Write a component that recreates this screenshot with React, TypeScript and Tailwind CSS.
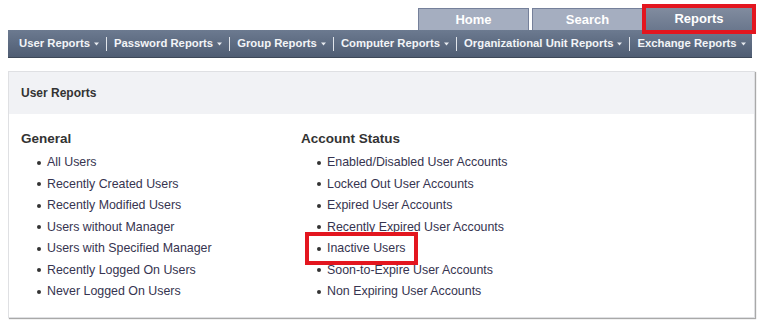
const navItems = [
  "User Reports",
  "Password Reports",
  "Group Reports",
  "Computer Reports",
  "Organizational Unit Reports",
  "Exchange Reports",
];

const general = [
  "All Users",
  "Recently Created Users",
  "Recently Modified Users",
  "Users without Manager",
  "Users with Specified Manager",
  "Recently Logged On Users",
  "Never Logged On Users",
];

const accountStatus = [
  "Enabled/Disabled User Accounts",
  "Locked Out User Accounts",
  "Expired User Accounts",
  "Recently Expired User Accounts",
  "Inactive Users",
  "Soon-to-Expire User Accounts",
  "Non Expiring User Accounts",
];

function Caret() {
  return (
    <svg width="5" height="4" viewBox="0 0 5 4" className="ml-[4px] mt-[1px] shrink-0">
      <path d="M0 0.5h5L2.5 3.5z" fill="#e8ebf0" />
    </svg>
  );
}

function ReportList({
  title,
  items,
  marked,
}: {
  title: string;
  items: string[];
  marked?: string;
}) {
  return (
    <div>
      <h3 className="text-[13.5px] font-bold text-[#333] leading-[20px]">{title}</h3>
      <ul className="mt-[3px]">
        {items.map((item) => (
          <li
            key={item}
            className="h-[21.5px] flex items-center pl-[16px] text-[12.4px] text-[#363450] whitespace-nowrap"
          >
            <span className="relative flex items-center">
              {item === marked && (
                <span className="absolute left-[-12px] right-[-12px] top-[-7px] bottom-[-7px] border-[4px] border-[#e3161f]" />
              )}
              <span className="w-[4px] h-[4px] rounded-full bg-[#333] mr-[6px]" />
              {item}
            </span>
          </li>
        ))}
      </ul>
    </div>
  );
}

export default function App() {
  return (
    <div
      className="w-[757px] h-[320px] bg-white relative overflow-hidden"
      style={{ fontFamily: '"Liberation Sans", Arial, sans-serif' }}
    >
      <div className="pl-[8px] w-[752px]">
        {/* tabs */}
        <div className="flex justify-end items-end h-[30px] gap-[3px]">
          <div className="w-[111px] h-[22px] bg-[#a5aec0] border border-b-0 border-[#75809a] flex items-center justify-center text-white text-[13px] font-bold">
            Home
          </div>
          <div className="w-[111px] h-[22px] bg-[#a5aec0] border border-b-0 border-[#75809a] flex items-center justify-center text-white text-[13px] font-bold">
            Search
          </div>
          <div className="relative w-[106px] h-[22px] bg-gradient-to-b from-[#818c9f] to-[#6a778d] flex items-center justify-center text-white text-[13px] font-bold">
            <span className="absolute left-[-4px] right-[-4px] top-[-4px] bottom-[-4px] border-[4px] border-[#e3161f]" />
            Reports
          </div>
        </div>
        {/* menu bar */}
        <div className="h-[27px] bg-gradient-to-b from-[#6c7a90] to-[#4f5d73] flex items-center pl-[11px] text-[11.3px] font-bold text-[#f2f4f7] whitespace-nowrap shadow-[0_1px_0_#3d4858]">
          {navItems.map((item, i) => (
            <div key={item} className="flex items-center shrink-0">
              {i > 0 && <span className="mx-[7px] w-px h-[14px] bg-[#e0e4ea]" />}
              <span>{item}</span>
              <Caret />
            </div>
          ))}
        </div>
      </div>

      {/* panel */}
      <div className="mt-[14px] ml-[8px] w-[747px] h-[247px] border border-[#dfe0e3] shadow-[1px_1px_1px_#a9a9a9] bg-white">
        <div className="h-[42px] bg-[#f1f2f5] flex items-center pl-[12px] text-[12px] font-bold text-[#333]">
          User Reports
        </div>
        <div className="flex pt-[15px] pl-[12px]">
          <div className="w-[280px]">
            <ReportList title="General" items={general} />
          </div>
          <ReportList title="Account Status" items={accountStatus} marked="Inactive Users" />
        </div>
      </div>
    </div>
  );
}
